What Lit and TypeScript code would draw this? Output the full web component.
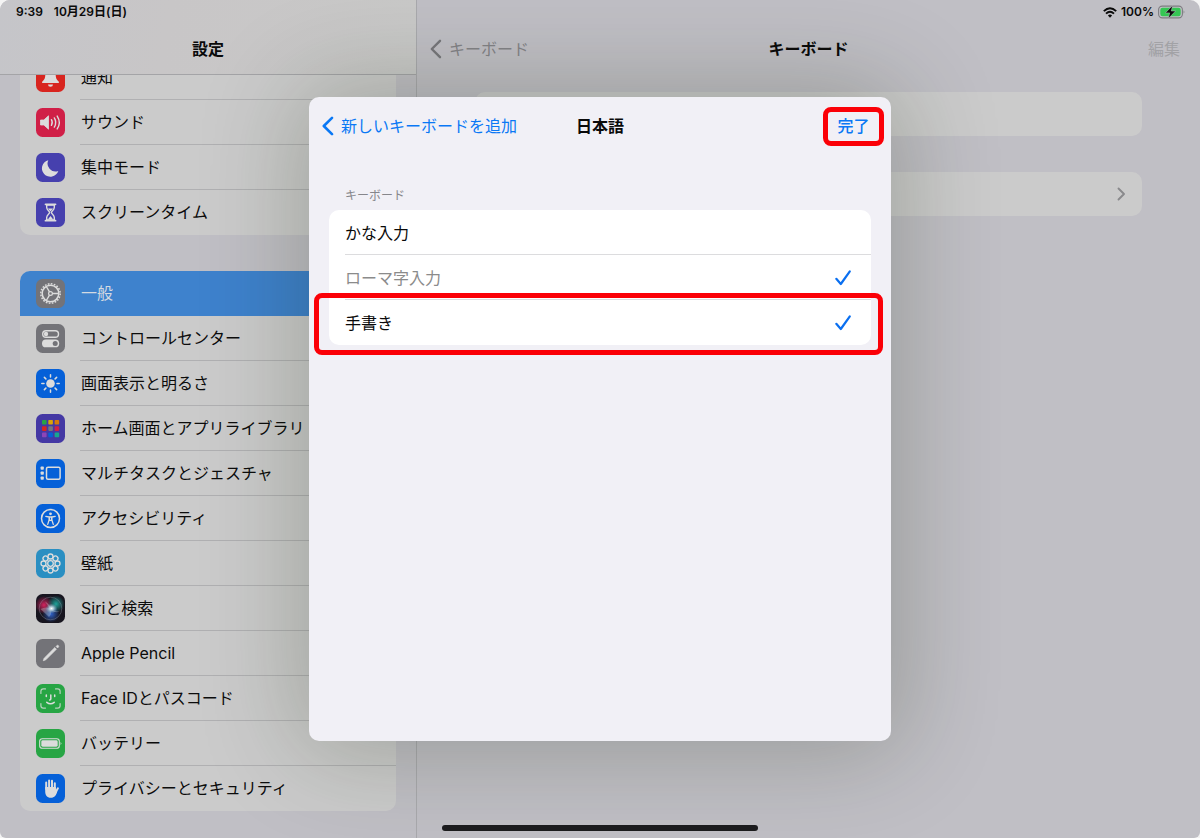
import { LitElement, html, svg, css, TemplateResult } from "lit";
import { customElement, state } from "lit/decorators.js";
import { classMap } from "lit/directives/class-map.js";

interface SettingsItem {
  id: string;
  label: string;
  color: string;
}

interface KeyboardOption {
  label: string;
  checked: boolean;
  disabled?: boolean;
  marked?: boolean;
}

const ALERT_ITEMS: SettingsItem[] = [
  { id: "bell", label: "通知", color: "#d8251f" },
  { id: "sound", label: "サウンド", color: "#d01f47" },
  { id: "moon", label: "集中モード", color: "#4640ae" },
  { id: "hourglass", label: "スクリーンタイム", color: "#4640ae" },
];

const GENERAL_ITEMS: SettingsItem[] = [
  { id: "gear", label: "一般", color: "#737378" },
  { id: "toggles", label: "コントロールセンター", color: "#737378" },
  { id: "sun", label: "画面表示と明るさ", color: "#0560d8" },
  { id: "grid", label: "ホーム画面とアプリライブラリ", color: "#4438a4" },
  { id: "windows", label: "マルチタスクとジェスチャ", color: "#0560d8" },
  { id: "person", label: "アクセシビリティ", color: "#0560d8" },
  { id: "flower", label: "壁紙", color: "#2a8fc2" },
  { id: "siri", label: "Siriと検索", color: "#17151f" },
  { id: "pencil", label: "Apple Pencil", color: "#737378" },
  { id: "face", label: "Face IDとパスコード", color: "#27a544" },
  { id: "battery", label: "バッテリー", color: "#27a544" },
  { id: "hand", label: "プライバシーとセキュリティ", color: "#0560d8" },
];

const INK = "#dcdcdc";
const turns = (n: number) => Array.from({ length: n }, (_, i) => (360 / n) * i);
const GRID_COLORS = [
  "#27a544", "#d9a407", "#d67a0a",
  "#d8251f", "#77777c", "#d01f47",
  "#8c45b8", "#0560d8", "#17a690",
];

const GLYPHS: Record<string, TemplateResult> = {
  bell: svg`<path d="M14.500 5.500c-3.600 0-5.200 2.600-5.200 6 0 3.800-.9 5.200-3.100 7.200-.6.6-.3 1.400.6 1.400h15.400c.9 0 1.200-.8.6-1.400-2.200-2-3.100-3.400-3.100-7.200 0-3.400-1.600-6-5.200-6z" fill=${INK}/><path d="M12 21.500h5a2.500 2.300 0 0 1-5 0z" fill=${INK}/>`,
  sound: svg`<path d="M4.500 12h3.400l4.600-4.200v13.400L7.900 17H4.500z" fill=${INK} stroke=${INK} stroke-width=".8" stroke-linejoin="round"/><g fill="none" stroke=${INK} stroke-width="1.400" stroke-linecap="round"><path d="M15.400 11.700q1.700 2.800 0 5.600"/><path d="M18.300 9.900q2.900 4.600 0 9.200"/><path d="M21.200 8.100q4.200 6.400 0 12.800"/></g>`,
  moon: svg`<path d="M12.300 7.200a8 8 0 0 0 10 10.800 8.400 8.400 0 1 1-10-10.800z" fill=${INK}/>`,
  hourglass: svg`<path d="M9.500 6.300h10M9.500 22.700h10" stroke=${INK} stroke-width="1.800" stroke-linecap="round"/><path d="M10.700 7v2.600c0 2.400 2.900 3.500 2.900 4.900s-2.900 2.500-2.900 4.900V22h7.600v-2.600c0-2.400-2.900-3.500-2.900-4.900s2.900-2.500 2.900-4.900V7z" fill="none" stroke=${INK} stroke-width="1.400"/><path d="M12 10.600h5l-2.500 3zM11.800 21.500l2.700-3.500 2.700 3.500z" fill=${INK}/>`,
  gear: svg`<circle cx="14.500" cy="14.500" r="8.300" fill="none" stroke=${INK} stroke-width="1.500"/><circle cx="14.500" cy="14.500" r="9.700" fill="none" stroke=${INK} stroke-width="1.500" stroke-dasharray="1.700 1.347"/><circle cx="14.500" cy="14.500" r="1.900" fill="none" stroke=${INK} stroke-width="1.200"/><path d="M16.400 14.500h6.100M13.500 12.900l-3.200-5.400M13.500 16.100l-3.200 5.400" stroke=${INK} stroke-width="1.400"/>`,
  toggles: svg`<rect x="6.700" y="6.700" width="15.800" height="6.600" rx="3.300" fill="none" stroke=${INK} stroke-width="1.400"/><circle cx="10" cy="10" r="2.200" fill=${INK}/><rect x="6" y="15.500" width="17.200" height="7.800" rx="3.900" fill=${INK}/><circle cx="19.200" cy="19.400" r="2.500" fill="#737378"/>`,
  sun: svg`<circle cx="14.500" cy="14.500" r="4.300" fill=${INK}/>${turns(8).map(
    (a) => svg`<path d="M14.500 5.800v2.200" stroke=${INK} stroke-width="1.500" stroke-linecap="round" transform="rotate(${a} 14.500 14.500)"/>`
  )}`,
  grid: svg`${GRID_COLORS.map(
    (c, i) => svg`<rect x=${6 + (i % 3) * 6.3} y=${6 + Math.floor(i / 3) * 6.3} width="4.600" height="4.600" rx=".8" fill=${c}/>`
  )}`,
  windows: svg`<rect x="10.500" y="8.200" width="13.600" height="12" rx="1.500" fill="none" stroke=${INK} stroke-width="1.500"/><g fill=${INK}><rect x="4.600" y="7.600" width="3.200" height="3.200" rx=".7"/><rect x="4.600" y="12.600" width="3.200" height="3.200" rx=".7"/><rect x="4.600" y="17.600" width="3.200" height="3.200" rx=".7"/></g>`,
  person: svg`<circle cx="14.500" cy="14.500" r="9" fill="none" stroke=${INK} stroke-width="1.500"/><circle cx="14.500" cy="9.800" r="1.400" fill=${INK}/><path d="M9.800 12.300l3.300.7v3l-1.400 4.400M19.200 12.300l-3.300.7v3l1.400 4.400M13.400 13h2.200v3.400h-2.200z" fill="none" stroke=${INK} stroke-width="1.300" stroke-linecap="round" stroke-linejoin="round"/>`,
  flower: svg`${turns(8).map(
    (a) => svg`<circle cx="14.500" cy="7.500" r="2.500" fill="none" stroke=${INK} stroke-width="1.300" transform="rotate(${a} 14.500 14.500)"/>`
  )}<circle cx="14.500" cy="14.500" r="2.800" fill="none" stroke=${INK} stroke-width="1.300"/>`,
  siri: svg`<defs><radialGradient id="pink"><stop offset="0" stop-color="#d4235e"/><stop offset="1" stop-color="#d4235e" stop-opacity="0"/></radialGradient><radialGradient id="teal"><stop offset="0" stop-color="#1fa39a"/><stop offset="1" stop-color="#1fa39a" stop-opacity="0"/></radialGradient><radialGradient id="blue"><stop offset="0" stop-color="#2f62c8"/><stop offset="1" stop-color="#2f62c8" stop-opacity="0"/></radialGradient><radialGradient id="glow"><stop offset="0" stop-color="#fff"/><stop offset=".35" stop-color="#c3dde6" stop-opacity=".85"/><stop offset="1" stop-color="#7fa9c4" stop-opacity="0"/></radialGradient></defs><circle cx="8" cy="11" r="9" fill="url(#pink)"/><circle cx="20" cy="10" r="8.500" fill="url(#teal)"/><circle cx="15" cy="20" r="8.500" fill="url(#blue)"/><circle cx="14.500" cy="14.500" r="11.300" fill="none" stroke="#9aa3b4" stroke-width=".7" opacity=".5"/><path d="M4.500 15q6-3 10 0t9.500 2.500q-5 2-8.500-1.500T9 7.500q5 2.500 6 7.500t-2 8" fill="#dfeaf0" opacity=".3"/><ellipse cx="15.500" cy="14.500" rx="6" ry="5" fill="url(#glow)"/>`,
  pencil: svg`<path d="M7.300 21.700l.9-2.500L18.800 8.600l1.600 1.600L9.800 20.800z" fill=${INK} stroke=${INK} stroke-width=".7" stroke-linejoin="round"/><path d="M20 7.400l.8-.8a1.130 1.130 0 0 1 1.600 1.600l-.8.8z" fill=${INK} stroke=${INK} stroke-width=".5"/>`,
  face: svg`<g fill="none" stroke=${INK} stroke-width="1.200" stroke-linecap="round"><path d="M4.900 9.500V7.300q0-2.400 2.400-2.400h2.200M19.500 4.900h2.200q2.400 0 2.400 2.400v2.200M24.100 19.500v2.200q0 2.400-2.400 2.400h-2.200M9.500 24.100H7.300q-2.400 0-2.400-2.400v-2.200" opacity=".8"/><path d="M10.300 11v1.600M18.700 11v1.600M14.800 11v4q0 1-1.200 1M10.800 18.300q3.700 3 7.400 0" stroke-width="1.500"/></g>`,
  battery: svg`<rect x="3.700" y="9.700" width="19.600" height="9.600" rx="2.600" fill="none" stroke=${INK} stroke-width="1.100"/><rect x="5.300" y="11.300" width="16.400" height="6.400" rx="1.400" fill=${INK}/><path d="M24.600 12.800q1.800 1.700 0 3.400z" fill=${INK}/>`,
  hand: svg`<g fill="none" stroke=${INK} stroke-width="2" stroke-linecap="round"><path d="M10.200 15V8.600M13.100 14V6.400M16 14V6.800M18.800 15V9.200M19.500 18.500l2.400-4.200"/></g><path d="M9.200 13h10.600l.2 3.500 1.300.7c-.8 3.600-2.800 6.600-6.500 6.600-3.800 0-5.600-2.800-5.600-6.300z" fill=${INK}/>`,
};

@customElement("settings-icon")
class SettingsIcon extends LitElement {
  static properties = { name: {}, color: {} };
  declare name: string;
  declare color: string;

  static styles = css`
    :host {
      display: block;
      flex: none;
      width: 29px;
      height: 29px;
    }
    .tile {
      display: block;
      width: 100%;
      height: 100%;
    }
  `;

  render() {
    return html`<svg class="tile" viewBox="0 0 29 29" aria-hidden="true">
      <rect width="29" height="29" rx="6.500" fill=${this.color}></rect>
      ${GLYPHS[this.name]}
    </svg>`;
  }
}

@customElement("settings-group")
class SettingsGroup extends LitElement {
  static properties = { items: { attribute: false }, selected: {} };
  declare items: SettingsItem[];
  declare selected: string;

  static styles = css`
    :host {
      display: block;
      flex: none;
    }
    .list {
      margin: 0;
      padding: 0;
      list-style: none;
      background: #cbcbcb;
      border-radius: 10px;
      overflow: hidden;
    }
    .row {
      display: flex;
      align-items: center;
      gap: 15px;
      height: 45px;
      padding-left: 16px;
      color: #0c0c0c;
      text-decoration: none;
      font-size: 16px;
      line-height: 24px;
    }
    .label {
      flex: 1;
      box-sizing: border-box;
      height: 45px;
      padding: 10px 0 0 1px;
      border-bottom: 1px solid #b0b0b2;
      white-space: nowrap;
    }
    .last .label,
    .selected .label {
      border-color: transparent;
    }
    .selected {
      background: #3e82cd;
      color: #d3dae2;
    }
  `;

  render() {
    return html`<ul class="list">
      ${this.items.map(
        (item, i) => html`<li>
          <a
            href="#${item.id}"
            class=${classMap({
              row: true,
              selected: item.id === this.selected,
              last: i === this.items.length - 1,
            })}
          >
            <settings-icon .name=${item.id} .color=${item.color}></settings-icon>
            <span class="label">${item.label}</span>
          </a>
        </li>`
      )}
    </ul>`;
  }
}

@customElement("keyboard-dialog")
class KeyboardDialog extends LitElement {
  @state() private options: KeyboardOption[] = [
    { label: "かな入力", checked: false },
    { label: "ローマ字入力", checked: true, disabled: true },
    { label: "手書き", checked: true, marked: true },
  ];

  static styles = css`
    :host {
      display: block;
      box-sizing: border-box;
      width: 582px;
      max-width: 100%;
      min-height: 644px;
      padding: 0 20px;
      border-radius: 10px;
      background: #f1f0f6;
      box-shadow: 0 0 100px 10px rgba(22, 34, 8, 0.24);
      font-size: 16px;
      line-height: 24px;
    }
    .bar {
      display: grid;
      grid-template-columns: 1fr auto 1fr;
      align-items: center;
      height: 58px;
      margin: 0 -13px;
    }
    .title {
      margin: 0;
      font-size: 16px;
      font-weight: 700;
      color: #0a0a0a;
    }
    .back,
    .done {
      margin: 0;
      padding: 0;
      border: 0;
      background: none;
      color: #0a78f5;
      font: inherit;
      white-space: nowrap;
      cursor: pointer;
    }
    .back {
      justify-self: start;
      display: flex;
      align-items: center;
      gap: 7px;
      padding-left: 5px;
    }
    .chevron {
      width: 13px;
      height: 20px;
    }
    .done {
      justify-self: end;
      box-sizing: border-box;
      width: 61px;
      height: 39px;
      border: 5px solid #fb0007;
      border-radius: 8px;
      font-weight: 500;
    }
    .options {
      margin: 0;
      padding: 0;
      border: 0;
    }
    .caption {
      padding: 31px 16px 4px;
      font-size: 12px;
      line-height: 20px;
      color: #86868b;
    }
    .list {
      margin: 0;
      padding: 0;
      list-style: none;
      background: #fff;
      border-radius: 10px;
    }
    .item {
      position: relative;
      padding-left: 16px;
    }
    .option {
      display: flex;
      align-items: center;
      justify-content: space-between;
      box-sizing: border-box;
      height: 45px;
      padding: 2px 19px 0 0;
      border-bottom: 1px solid #dcdcde;
      color: #0a0a0a;
    }
    .item:last-child .option {
      border-color: transparent;
    }
    .disabled {
      color: #8b8b8b;
    }
    .box {
      appearance: none;
      position: absolute;
      inset: 0;
      margin: 0;
    }
    .check {
      width: 18px;
      height: 18px;
    }
    .marker {
      position: absolute;
      inset: -7px -12px -10px -15px;
      border: 5px solid #fb0007;
      border-radius: 8px;
      pointer-events: none;
    }
  `;

  private toggle(index: number) {
    this.options = this.options.map((o, i) => (i === index ? { ...o, checked: !o.checked } : o));
  }

  render() {
    return html`
      <header class="bar">
        <button class="back" type="button">
          <svg class="chevron" viewBox="0 0 13 20" aria-hidden="true">
            <path d="M11 1.800L2.800 10l8.200 8.200" fill="none" stroke="#0a78f5" stroke-width="2.600" stroke-linecap="round" stroke-linejoin="round" />
          </svg>
          新しいキーボードを追加
        </button>
        <h2 class="title">日本語</h2>
        <button class="done" type="button">完了</button>
      </header>
      <fieldset class="options">
        <legend class="caption">キーボード</legend>
        <ul class="list">
          ${this.options.map(
            (o, i) => html`<li class="item">
              <label class=${classMap({ option: true, disabled: !!o.disabled })}>
                <input class="box" type="checkbox" .checked=${o.checked} ?disabled=${o.disabled} @change=${() => this.toggle(i)} />
                <span>${o.label}</span>
                ${o.checked
                  ? html`<svg class="check" viewBox="0 0 18 18" aria-hidden="true">
                      <path d="M2.300 9.800l4.500 5.200L15.800 2.300" fill="none" stroke="#0a6ff0" stroke-width="2.200" stroke-linecap="round" stroke-linejoin="round" />
                    </svg>`
                  : null}
              </label>
              ${o.marked ? html`<div class="marker"></div>` : null}
            </li>`
          )}
        </ul>
      </fieldset>
    `;
  }
}

@customElement("app-root")
class AppRoot extends LitElement {
  static styles = css`
    :host {
      display: block;
      background: #f4f4f4;
      font-family: Inter, "Noto Sans CJK JP", sans-serif;
      font-size: 16px;
      line-height: 24px;
      color: #0a0a0a;
    }
    .screen {
      position: relative;
      display: grid;
      grid-template-columns: 417px 1fr;
      height: 100vh;
      border-radius: 10px 10px 6px 6px;
      overflow: hidden;
      background: #c0bfc5;
    }
    .sidebar {
      display: flex;
      flex-direction: column;
      min-height: 0;
      border-right: 1px solid #a9a9ad;
    }
    .sidebar-head {
      flex: none;
      box-sizing: border-box;
      height: 75px;
      border-bottom: 1px solid #a4a4a7;
      background: linear-gradient(100deg, #c5c5c9, #c8c6c7 40%, #c9c9c8);
    }
    .title {
      margin: 0;
      font-size: 16px;
      font-weight: 700;
      text-align: center;
    }
    .status {
      display: flex;
      align-items: center;
      gap: 11px;
      height: 24px;
      padding: 0 16px;
      font-size: 12px;
      font-weight: 600;
    }
    .sidebar-head .title {
      margin-top: 13px;
    }
    .scroller {
      flex: 1;
      min-height: 0;
      display: flex;
      flex-direction: column;
      justify-content: flex-end;
      gap: 36px;
      padding: 0 20px 27px;
      overflow: hidden;
    }
    .pane .status {
      justify-content: flex-end;
      gap: 4px;
      padding-right: 14px;
    }
    .wifi {
      width: 14px;
      height: 11px;
    }
    .battery {
      width: 28px;
      height: 14px;
    }
    .nav {
      display: grid;
      grid-template-columns: 1fr auto 1fr;
      align-items: center;
      height: 50px;
      padding: 0 20px;
    }
    .back,
    .edit {
      padding: 0;
      border: 0;
      background: none;
      font: inherit;
      color: #838387;
    }
    .back {
      justify-self: start;
      display: flex;
      align-items: center;
      gap: 7px;
      margin-left: -8px;
    }
    .chevron {
      width: 13px;
      height: 20px;
    }
    .edit {
      justify-self: end;
      color: #a2a2a6;
    }
    .cards {
      display: flex;
      flex-direction: column;
      gap: 36px;
      padding: 18px 58px 0;
    }
    .card {
      display: flex;
      align-items: center;
      justify-content: flex-end;
      height: 44px;
      padding: 0 16px;
      border-radius: 10px;
      background: #cbcbcb;
    }
    .disclosure {
      width: 9px;
      height: 14px;
    }
    .overlay {
      position: absolute;
      inset: 0;
      display: flex;
      align-items: center;
      justify-content: center;
    }
    .home {
      position: absolute;
      left: 50%;
      bottom: 7px;
      width: 316px;
      height: 6px;
      margin-left: -158px;
      border-radius: 3px;
      background: #1b1b1d;
    }
  `;

  render() {
    return html`
      <div class="screen">
        <aside class="sidebar">
          <header class="sidebar-head">
            <div class="status"><span>9:39</span><span>10月29日(日)</span></div>
            <h1 class="title">設定</h1>
          </header>
          <nav class="scroller">
            <settings-group .items=${ALERT_ITEMS}></settings-group>
            <settings-group .items=${GENERAL_ITEMS} .selected=${"gear"}></settings-group>
          </nav>
        </aside>
        <main class="pane">
          <div class="status">
            <svg class="wifi" viewBox="0 0 14 11" aria-hidden="true">
              <g fill="none" stroke="#0a0a0a" stroke-width="1.900">
                <path d="M.8 4.100Q7-1.800 13.200 4.100" />
                <path d="M3 6.600q4-3.700 8 0" />
              </g>
              <path d="M4.900 8.500q2.100-1.800 4.200 0L7 10.700z" fill="#0a0a0a" />
            </svg>
            <span>100%</span>
            <svg class="battery" viewBox="0 0 28 14" aria-hidden="true">
              <rect x=".6" y="1.100" width="23.800" height="11.800" rx="3.600" fill="none" stroke="#7d7d80" stroke-width="1.100" />
              <path d="M25.600 5.200q1.800 1.800 0 3.600z" fill="#7d7d80" />
              <rect x="2.300" y="2.800" width="20.400" height="8.400" rx="2.200" fill="#35c653" />
              <path d="M14.600.4L7.400 7.900h4.300l-1.400 5.700 7.300-7.600h-4.300z" fill="#0a0a0a" stroke="#c0bfc5" stroke-width=".5" />
            </svg>
          </div>
          <header class="nav">
            <button class="back" type="button">
              <svg class="chevron" viewBox="0 0 13 20" aria-hidden="true">
                <path d="M11 1.800L2.800 10l8.200 8.200" fill="none" stroke="#77777b" stroke-width="2.400" stroke-linecap="round" stroke-linejoin="round" />
              </svg>
              キーボード
            </button>
            <h2 class="title">キーボード</h2>
            <button class="edit" type="button" disabled>編集</button>
          </header>
          <div class="cards">
            <div class="card"></div>
            <div class="card">
              <svg class="disclosure" viewBox="0 0 9 14" aria-hidden="true">
                <path d="M1.500 1.500L7 7l-5.500 5.500" fill="none" stroke="#89898c" stroke-width="1.900" stroke-linecap="round" stroke-linejoin="round" />
              </svg>
            </div>
          </div>
        </main>
        <div class="overlay">
          <keyboard-dialog role="dialog" aria-label="日本語"></keyboard-dialog>
        </div>
        <div class="home"></div>
      </div>
    `;
  }
}
